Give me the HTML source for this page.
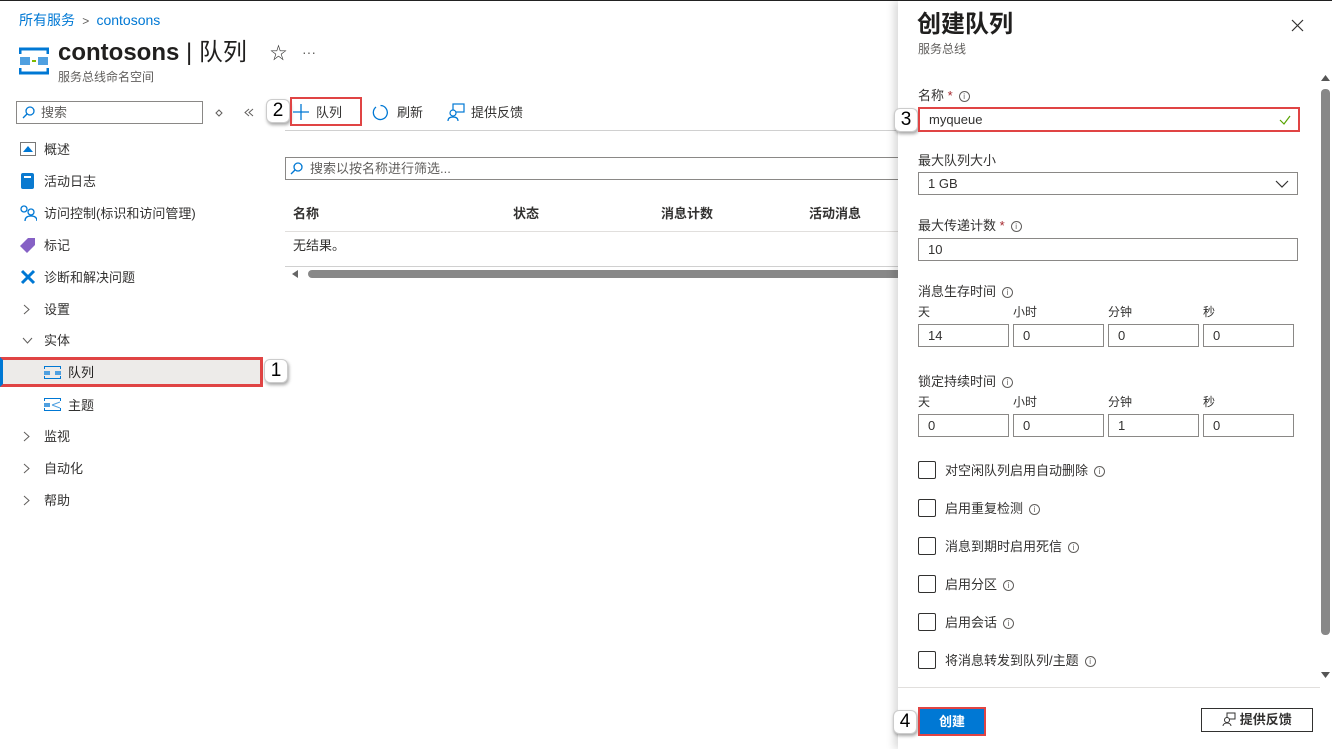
<!DOCTYPE html>
<html><head><meta charset="utf-8"><style>
*{box-sizing:border-box;margin:0;padding:0}
body{width:1332px;height:748px;overflow:hidden;background:#fff;font-family:"Liberation Sans","Noto Sans CJK SC",sans-serif;color:#323130;font-size:13px;line-height:15px;position:relative;border-top:1px solid #222}
.a{position:absolute;white-space:nowrap}
.badge{position:absolute;width:24px;height:24px;background:#fff;border-radius:6px;box-shadow:1px 2px 3px rgba(0,0,0,.35);border:1px solid #ccc;font-size:19px;line-height:22px;text-align:center;color:#000}
.inp{position:absolute;border:1px solid #8a8886;height:23px;background:#fff;font-size:13px;line-height:21px;padding-left:9px}
.lbl{position:absolute;font-size:13px;color:#323130}
.sub{position:absolute;font-size:12px;color:#323130}
.i{display:inline-block;width:11px;height:11px;border:1px solid #605e5c;border-radius:50%;font-size:8px;line-height:9px;text-align:center;color:#605e5c;margin-left:6px;vertical-align:1px}
.cb{position:absolute;width:18px;height:18px;border:1px solid #323130;border-radius:2px;left:918px}
.cbl{position:absolute;left:945px;font-size:13px}
.nav{position:absolute;left:44px;font-size:13px}
.chev{position:absolute;left:22px}
</style></head><body>
<div class="a" style="left:19px;top:11px;font-size:14px;line-height:16px;color:#0078d4">所有服务 <span style="color:#605e5c;font-size:12px">&nbsp;&gt;&nbsp;</span> contosons</div>
<svg class="a" style="left:19px;top:45px" width="30" height="30" viewBox="0 0 30 30"><path d="M1 8V3h28v5M1 22v5h28v-5" stroke="#0078d4" stroke-width="3" fill="none"/><rect x="1" y="11" width="10" height="8" fill="#50a0e0"/><rect x="19" y="11" width="10" height="8" fill="#50a0e0"/><rect x="13" y="14" width="4" height="2" fill="#7fba00"/></svg>
<div class="a" style="left:58px;top:38px;font-size:24px;line-height:28px;font-weight:bold;color:#201f1e">contosons <span style="font-weight:normal">| 队列</span></div>
<div class="a" style="left:270px;top:44px;font-size:17px;line-height:18px">☆</div>
<div class="a" style="left:302px;top:44px;font-size:14px;color:#605e5c">···</div>
<div class="a" style="left:58px;top:69px;font-size:12px;color:#605e5c">服务总线命名空间</div>
<div class="inp" style="left:16px;top:100px;width:187px;padding-left:24px;color:#605e5c">搜索</div>
<svg class="a" style="left:22px;top:105px" width="13" height="13"><circle cx="8" cy="5" r="4" stroke="#0078d4" fill="none" stroke-width="1.3"/><path d="M5 8L1 12" stroke="#0078d4" stroke-width="1.3"/></svg>
<svg class="a" style="left:215px;top:108px" width="8" height="8"><path d="M4 1L7 4 4 7 1 4z" fill="none" stroke="#605e5c"/></svg>
<svg class="a" style="left:244px;top:107px" width="10" height="9"><path d="M5 1L1 4.5 5 8M9 1L5 4.5 9 8" fill="none" stroke="#605e5c"/></svg>
<svg class="a" style="left:20px;top:141px" width="16" height="14"><rect x="0.5" y="0.5" width="15" height="13" fill="none" stroke="#777"/><path d="M3 10l5-6 5 6z" fill="#0078d4"/></svg>
<div class="nav" style="top:141px">概述</div>
<svg class="a" style="left:21px;top:172px" width="13" height="16"><rect width="13" height="16" rx="2" fill="#0a7ad0"/><rect x="3" y="3" width="7" height="2" fill="#fff"/></svg>
<div class="nav" style="top:173px">活动日志</div>
<svg class="a" style="left:19px;top:204px" width="18" height="16"><circle cx="5" cy="4" r="3" fill="none" stroke="#0078d4" stroke-width="1.3"/><circle cx="12" cy="7" r="3" fill="none" stroke="#0078d4" stroke-width="1.3"/><path d="M6 16c0-4 3-5 6-5s6 1 6 5" fill="none" stroke="#0078d4" stroke-width="1.3"/></svg>
<div class="nav" style="top:205px">访问控制(标识和访问管理)</div>
<svg class="a" style="left:20px;top:236px" width="16" height="16"><path d="M8 1h7v7l-8 8-7-7z" fill="#8661c5"/></svg>
<div class="nav" style="top:237px">标记</div>
<svg class="a" style="left:20px;top:268px" width="16" height="16"><path d="M2 2l12 12M14 2L2 14" stroke="#0078d4" stroke-width="3"/></svg>
<div class="nav" style="top:269px">诊断和解决问题</div>
<svg class="chev" style="top:303px" width="8" height="11"><path d="M2 1l5 4.5L2 10" fill="none" stroke="#605e5c"/></svg><div class="nav" style="top:301px">设置</div>
<svg class="chev" style="top:336px" width="11" height="8"><path d="M1 1l4.5 5L10 1" fill="none" stroke="#605e5c"/></svg><div class="nav" style="top:332px">实体</div>
<div class="a" style="left:0;top:356px;width:263px;height:30px;background:#edebe9;border:3px solid #e04444;border-left:3px solid #0078d4"></div>
<svg class="a" style="left:44px;top:365px" width="17" height="13"><path d="M0 3V0h17v3M0 10v3h17v-3" stroke="#0078d4" stroke-width="2" fill="none"/><rect x="0" y="5" width="6" height="4" fill="#50a0e0"/><rect x="11" y="5" width="6" height="4" fill="#50a0e0"/></svg>
<div class="nav" style="top:364px;left:68px;color:#201f1e">队列</div>
<div class="badge" style="left:264px;top:358px">1</div>
<svg class="a" style="left:44px;top:397px" width="17" height="13"><path d="M0 3V0h17v3M0 10v3h17v-3" stroke="#0078d4" stroke-width="2" fill="none"/><rect x="0" y="5" width="6" height="4" fill="#50a0e0"/><path d="M8 7l8-3M8 7l8 3" stroke="#50a0e0"/></svg>
<div class="nav" style="top:397px;left:68px">主题</div>
<svg class="chev" style="top:430px" width="8" height="11"><path d="M2 1l5 4.5L2 10" fill="none" stroke="#605e5c"/></svg><div class="nav" style="top:428px">监视</div>
<svg class="chev" style="top:462px" width="8" height="11"><path d="M2 1l5 4.5L2 10" fill="none" stroke="#605e5c"/></svg><div class="nav" style="top:460px">自动化</div>
<svg class="chev" style="top:494px" width="8" height="11"><path d="M2 1l5 4.5L2 10" fill="none" stroke="#605e5c"/></svg><div class="nav" style="top:492px">帮助</div>

<div class="badge" style="left:266px;top:98px">2</div>
<div class="a" style="left:290px;top:96px;width:72px;height:29px;border:2px solid #e04444"></div>
<svg class="a" style="left:293px;top:103px" width="16" height="16"><path d="M8 0v16M0 8h16" stroke="#0078d4" stroke-width="1.3"/></svg>
<div class="a" style="left:316px;top:104px">队列</div>
<svg class="a" style="left:372px;top:103px" width="17" height="17"><path d="M4 3A7 7 0 1 0 8.5 1.5" fill="none" stroke="#0078d4" stroke-width="1.3"/></svg>
<div class="a" style="left:397px;top:104px">刷新</div>
<svg class="a" style="left:447px;top:102px" width="18" height="18"><rect x="6" y="1" width="11" height="8" fill="none" stroke="#0078d4" stroke-width="1.2"/><circle cx="6" cy="10" r="3" fill="#fff" stroke="#0078d4" stroke-width="1.2"/><path d="M1 18c0-3 2-4 5-4s5 1 5 4" fill="none" stroke="#0078d4" stroke-width="1.2"/></svg>
<div class="a" style="left:471px;top:104px">提供反馈</div>
<div class="a" style="left:285px;top:129px;width:613px;height:1px;background:#d0d0d0"></div>
<div class="inp" style="left:285px;top:156px;width:620px;padding-left:24px;color:#605e5c">搜索以按名称进行筛选...</div>
<svg class="a" style="left:290px;top:161px" width="13" height="13"><circle cx="8" cy="5" r="4" stroke="#0078d4" fill="none" stroke-width="1.3"/><path d="M5 8L1 12" stroke="#0078d4" stroke-width="1.3"/></svg>
<div class="a" style="left:293px;top:205px;font-weight:bold">名称</div>
<div class="a" style="left:513px;top:205px;font-weight:bold">状态</div>
<div class="a" style="left:661px;top:205px;font-weight:bold">消息计数</div>
<div class="a" style="left:809px;top:205px;font-weight:bold">活动消息</div>
<div class="a" style="left:285px;top:230px;width:613px;height:1px;background:#e1dfdd"></div>
<div class="a" style="left:293px;top:237px">无结果。</div>
<div class="a" style="left:285px;top:265px;width:613px;height:1px;background:#d0d0d0"></div>
<svg class="a" style="left:292px;top:269px" width="7" height="8"><path d="M6 0v8L0 4z" fill="#666"/></svg>
<div class="a" style="left:308px;top:269px;width:600px;height:8px;border-radius:4px;background:#888"></div>

<div class="a" style="left:898px;top:0;width:434px;height:748px;background:#fff;box-shadow:-4px 0 8px rgba(0,0,0,.15)"></div>
<div class="a" style="left:917px;top:10px;font-size:24px;line-height:28px;font-weight:bold;color:#201f1e">创建队列</div>
<svg class="a" style="left:1291px;top:18px" width="13" height="13"><path d="M1 1l11 11M12 1L1 12" stroke="#323130" stroke-width="1.2"/></svg>
<div class="a" style="left:918px;top:41px;font-size:12px;color:#605e5c">服务总线</div>
<svg class="a" style="left:1321px;top:74px" width="9" height="6"><path d="M0 6L4.5 0 9 6z" fill="#555"/></svg>
<div class="a" style="left:1321px;top:88px;width:9px;height:546px;border-radius:4px;background:#888"></div>
<svg class="a" style="left:1321px;top:671px" width="9" height="6"><path d="M0 0L4.5 6 9 0z" fill="#555"/></svg>

<div class="lbl" style="left:918px;top:87px">名称 <span style="color:#a4262c">*</span><span class="i">i</span></div>
<div class="badge" style="left:894px;top:107px">3</div>
<div class="inp" style="left:918px;top:106px;width:382px;height:25px;border:2px solid #e04444;line-height:21px">myqueue<svg style="position:absolute;right:7px;top:6px" width="12" height="10"><path d="M1 5l4 4 6-8" fill="none" stroke="#57a300" stroke-width="1.2"/></svg></div>
<div class="lbl" style="left:918px;top:152px">最大队列大小</div>
<div class="inp" style="left:918px;top:171px;width:380px">1 GB<svg style="position:absolute;right:8px;top:7px" width="14" height="8"><path d="M1 1l6 6 6-6" fill="none" stroke="#323130" stroke-width="1.2"/></svg></div>
<div class="lbl" style="left:918px;top:217px">最大传递计数 <span style="color:#a4262c">*</span><span class="i">i</span></div>
<div class="inp" style="left:918px;top:237px;width:380px">10</div>
<div class="lbl" style="left:918px;top:283px">消息生存时间<span class="i">i</span></div>
<div class="sub" style="left:918px;top:304px">天</div><div class="sub" style="left:1013px;top:304px">小时</div><div class="sub" style="left:1108px;top:304px">分钟</div><div class="sub" style="left:1203px;top:304px">秒</div>
<div class="inp" style="left:918px;top:323px;width:91px">14</div><div class="inp" style="left:1013px;top:323px;width:91px">0</div><div class="inp" style="left:1108px;top:323px;width:91px">0</div><div class="inp" style="left:1203px;top:323px;width:91px">0</div>
<div class="lbl" style="left:918px;top:373px">锁定持续时间<span class="i">i</span></div>
<div class="sub" style="left:918px;top:394px">天</div><div class="sub" style="left:1013px;top:394px">小时</div><div class="sub" style="left:1108px;top:394px">分钟</div><div class="sub" style="left:1203px;top:394px">秒</div>
<div class="inp" style="left:918px;top:413px;width:91px">0</div><div class="inp" style="left:1013px;top:413px;width:91px">0</div><div class="inp" style="left:1108px;top:413px;width:91px">1</div><div class="inp" style="left:1203px;top:413px;width:91px">0</div>

<div class="cb" style="top:460px"></div><div class="cbl" style="top:462px">对空闲队列启用自动删除<span class="i">i</span></div>
<div class="cb" style="top:498px"></div><div class="cbl" style="top:500px">启用重复检测<span class="i">i</span></div>
<div class="cb" style="top:536px"></div><div class="cbl" style="top:538px">消息到期时启用死信<span class="i">i</span></div>
<div class="cb" style="top:574px"></div><div class="cbl" style="top:576px">启用分区<span class="i">i</span></div>
<div class="cb" style="top:612px"></div><div class="cbl" style="top:614px">启用会话<span class="i">i</span></div>
<div class="cb" style="top:650px"></div><div class="cbl" style="top:652px">将消息转发到队列/主题<span class="i">i</span></div>

<div class="a" style="left:898px;top:686px;width:422px;height:1px;background:#e1dfdd"></div>
<div class="badge" style="left:893px;top:709px">4</div>
<div class="a" style="left:918px;top:706px;width:68px;height:29px;border:2px solid #e04444;background:#0078d4;color:#fff;font-weight:bold;text-align:center;line-height:25px;font-size:13px">创建</div>
<div class="a" style="left:1201px;top:707px;width:112px;height:24px;border:1px solid #323130;text-align:center;line-height:22px;font-weight:bold;font-size:13px">
<svg style="vertical-align:-2px" width="14" height="14"><rect x="5" y="1" width="8" height="6" fill="none" stroke="#323130"/><circle cx="5" cy="8" r="2.5" fill="#fff" stroke="#323130"/><path d="M1 14c0-2 2-3 4-3s4 1 4 3" fill="none" stroke="#323130"/></svg> 提供反馈</div>
</body></html>
